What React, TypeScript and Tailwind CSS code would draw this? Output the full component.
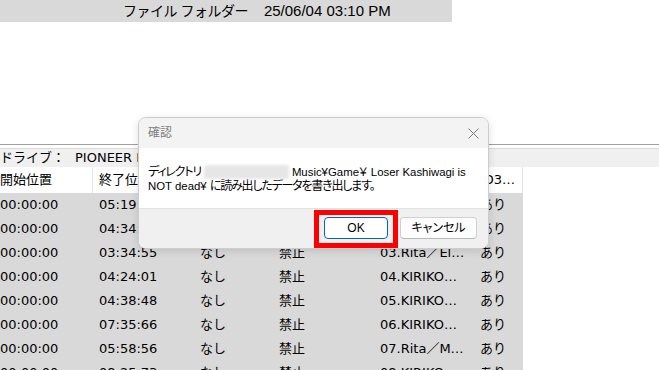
import React from 'react'

const rows = [
  ['00:00:00', '05:19:40', 'なし', '禁止', '01.KIRIKO…', 'あり'],
  ['00:00:00', '04:34:12', 'なし', '禁止', '02.Rita／S…', 'あり'],
  ['00:00:00', '03:34:55', 'なし', '禁止', '03.Rita／El…', 'あり'],
  ['00:00:00', '04:24:01', 'なし', '禁止', '04.KIRIKO…', 'あり'],
  ['00:00:00', '04:38:48', 'なし', '禁止', '05.KIRIKO…', 'あり'],
  ['00:00:00', '07:35:66', 'なし', '禁止', '06.KIRIKO…', 'あり'],
  ['00:00:00', '05:58:56', 'なし', '禁止', '07.Rita／M…', 'あり'],
  ['00:00:00', '08:25:73', 'なし', '禁止', '08.KIRIKO…', 'あり'],
]

const headers = ['開始位置', '終了位置', 'エンファシス', 'コピー', 'タイトル', 'ID3…']

const cols = 'grid grid-cols-[93px_101px_79px_101px_100px_49px] w-[523px]'

function CloseIcon() {
  return (
    <svg width="11" height="11" viewBox="0 0 11 11" fill="none">
      <path d="M0.5 0.5L10.5 10.5M10.5 0.5L0.5 10.5" stroke="#7a7a7a" strokeWidth="1" />
    </svg>
  )
}

export default function App() {
  return (
    <div className="relative w-[659px] h-[370px] overflow-hidden bg-white text-black font-['Liberation_Sans','Noto_Sans_CJK_JP',sans-serif]">
      {/* 上のファイル情報バー */}
      <div className="w-[452px] h-[22px] bg-[#d9d9d9] flex items-center pl-[123px] gap-[16px] whitespace-nowrap">
        <span className="text-[14px] tracking-[-0.5px]">ファイル フォルダー</span>
        <span className="text-[15px]">25/06/04 03:10 PM</span>
      </div>

      <div className="h-[122px]" />

      {/* ドライブ行 */}
      <div className="h-[4px] border-t border-[#a0a0a0]" />
      <div className="h-[19px] border-t border-[#dadada] bg-[#f0f0f0] flex items-center text-[13px] whitespace-nowrap font-['DejaVu_Sans','Noto_Sans_CJK_JP',sans-serif]">
        <span className="w-[75px]">ドライブ：</span>
        <span>PIONEER BD-RW BDR-XD07</span>
      </div>

      {/* テーブル */}
      <div className="font-['DejaVu_Sans','Noto_Sans_CJK_JP',sans-serif] text-[13px] whitespace-nowrap">
        <div className={`${cols} h-[26px] bg-white`}>
          {headers.map((h, i) => (
            <div
              key={h}
              className={`flex items-center overflow-hidden border-r border-[#e5e5e5] ${i === 0 ? 'pl-0' : 'pl-[6px]'}`}
            >
              {h}
            </div>
          ))}
        </div>
        {rows.map((r, ri) => (
          <div key={ri} className={`${cols} h-[24px] bg-[#d9d9d9]`}>
            {r.map((c, ci) => (
              <div key={ci} className={`flex items-center overflow-hidden ${ci === 0 ? 'pl-0' : 'pl-[6px]'}`}>
                {c}
              </div>
            ))}
          </div>
        ))}
      </div>

      {/* 確認ダイアログ */}
      <div className="absolute left-[138px] top-[117px] w-[351px] h-[132px] rounded-[8px] border border-[#cdcdcd] bg-white overflow-hidden shadow-[0_2px_8px_rgba(0,0,0,0.12)] flex flex-col [font-feature-settings:'palt']">
        <div className="h-[30px] bg-[#f3f3f3] flex items-center justify-between pl-[9px] pr-[9px] text-[12px] text-[#7f7f7f]">
          <span>確認</span>
          <CloseIcon />
        </div>
        <div className="h-[60px] pt-[17px] pl-[9px] text-[12px] leading-[14px] whitespace-nowrap">
          <div className="flex items-center">
            <span className="tracking-[-1.2px]">ディレクトリ</span>
            <span className="inline-block w-[85px] h-[14px] mx-[3px] rounded-[2px] bg-[#e6e6e6] blur-[1.5px]" />
            <span className="text-[11.4px]">Music¥Game￥ Loser Kashiwagi is</span>
          </div>
          <div>
            <span className="text-[11.4px]">NOT dead¥ </span>
            <span className="tracking-[-1.2px]">に読み出したデータを書き出します。</span>
          </div>
        </div>
        <div className="flex-1 bg-[#f0f0f0] border-t border-[#e3e3e3] flex items-end justify-end pr-[11px] gap-[2px] text-[12px]">
          <div className="border-[5px] border-[#ff0000] px-[5px] pt-[2px] pb-[4px]">
            <button
              type="button"
              className="w-[64px] h-[22px] rounded-[4px] bg-white border border-[#0067c0] flex items-center justify-center"
            >
              OK
            </button>
          </div>
          <div className="pb-[9px]">
            <button
              type="button"
              className="w-[77px] h-[22px] rounded-[4px] bg-[#fdfdfd] border border-[#d0d0d0] border-b-[#b8b8b8] flex items-center justify-center"
            >
              キャンセル
            </button>
          </div>
        </div>
      </div>
    </div>
  )
}
